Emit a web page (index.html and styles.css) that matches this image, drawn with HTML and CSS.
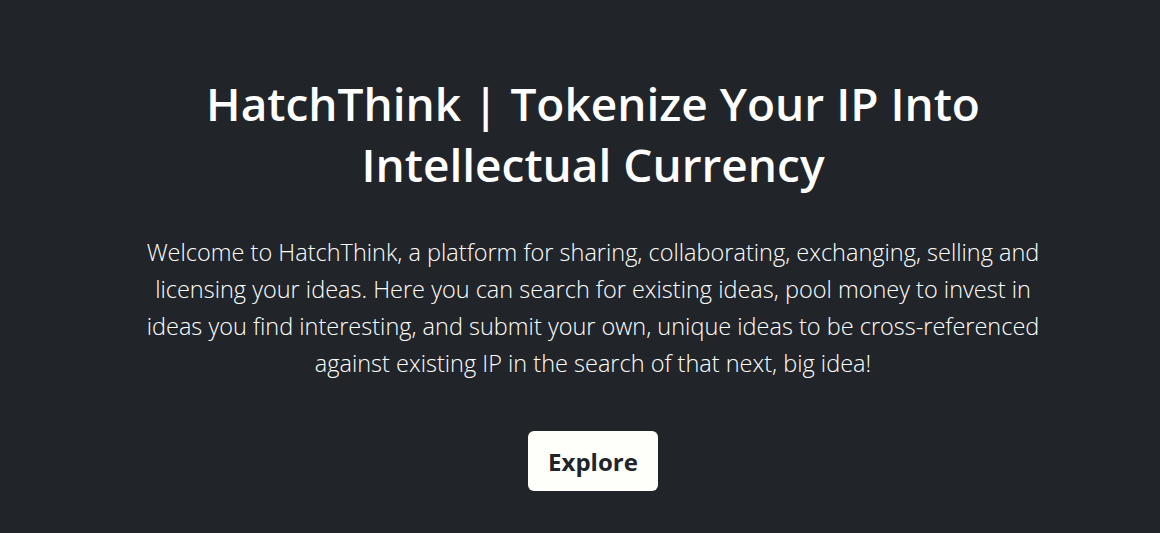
FILE: index.html
```html
<!DOCTYPE html>
<html lang="en">
<head>
<meta charset="utf-8">
<title>HatchThink</title>
<link rel="stylesheet" href="styles.css">
</head>
<body>
<section class="hero">
  <div class="hero-inner">
    <h1 class="hero-title">HatchThink | Tokenize Your IP Into Intellectual Currency</h1>
    <p class="hero-lead">Welcome to HatchThink, a platform for sharing, collaborating, exchanging, selling and licensing your ideas. Here you can search for existing ideas, pool money to invest in ideas you find interesting, and submit your own, unique ideas to be cross-referenced against existing IP in the search of that next, big idea!</p>
    <div class="hero-actions">
      <button class="btn-explore" type="button">Explore</button>
    </div>
  </div>
</section>
</body>
</html>
```

FILE: styles.css
```css
html, body {
  margin: 0;
  padding: 0;
  background: #212529;
}
body {
  font-family: "Open Sans", "Noto Sans", "Liberation Sans", sans-serif;
  color: #fff;
  min-height: 533px;
}
.hero {
  padding: 73px 12px 0 38px;
}
.hero-inner {
  max-width: 910px;
  margin: 0 auto;
  text-align: center;
  display: flex;
  flex-direction: column;
  align-items: center;
}
.hero-title {
  margin: 0;
  font-size: 46px;
  font-weight: 600;
  line-height: 61px;
  color: #fff;
}
.hero-lead {
  margin: 39px 0 0;
  font-size: 23.5px;
  font-weight: 300;
  line-height: 37px;
  color: #fff;
}
.hero-actions {
  margin-top: 49px;
}
.btn-explore {
  font-family: inherit;
  font-size: 24px;
  font-weight: 700;
  color: #212529;
  background: #fefefb;
  border: none;
  border-radius: 6px;
  width: 130px;
  height: 60px;
  padding: 0;
  cursor: pointer;
}
```
